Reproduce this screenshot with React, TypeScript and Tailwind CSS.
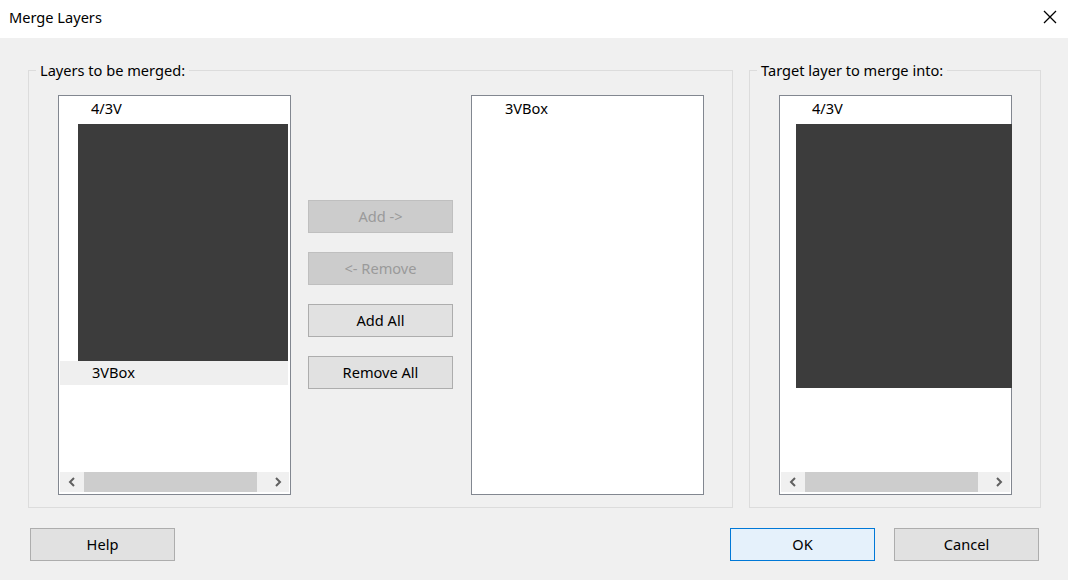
import React from 'react';

const FONT = { fontFamily: '"Noto Sans", "Open Sans", sans-serif' };

function ChevronLeft() {
  return (
    <svg width="8" height="10" viewBox="0 0 8 10">
      <path d="M6 1 L2 5 L6 9" fill="none" stroke="#606060" strokeWidth="2" />
    </svg>
  );
}

function ChevronRight() {
  return (
    <svg width="8" height="10" viewBox="0 0 8 10">
      <path d="M2 1 L6 5 L2 9" fill="none" stroke="#606060" strokeWidth="2" />
    </svg>
  );
}

function HScroll({ thumbLeft, thumbWidth }: { thumbLeft: number; thumbWidth: number }) {
  return (
    <div className="h-[20px] mx-[1px] mb-[2px] bg-[#f0f0f0] flex items-center relative">
      <div className="w-[23px] flex justify-center"><ChevronLeft /></div>
      <div className="flex-1 h-full relative">
        <div className="absolute top-0 h-full bg-[#cdcdcd]" style={{ left: thumbLeft, width: thumbWidth }} />
      </div>
      <div className="w-[23px] flex justify-center"><ChevronRight /></div>
    </div>
  );
}

function WinButton({ label, disabled, primary, className = '' }: { label: string; disabled?: boolean; primary?: boolean; className?: string }) {
  const tone = disabled
    ? 'bg-[#cccccc] border-[#bfbfbf] text-[#9a9a9a]'
    : primary
      ? 'bg-[#e5f1fb] border-[#0078d7] text-black'
      : 'bg-[#e1e1e1] border-[#adadad] text-black';
  return (
    <div className={`w-[145px] h-[33px] border flex items-center justify-center text-[14.6px] ${tone} ${className}`}>
      {label}
    </div>
  );
}

function GroupBox({ label, className, children }: { label: string; className: string; children: React.ReactNode }) {
  return (
    <div className={`relative border border-[#dcdcdc] h-[438px] ${className}`}>
      <span className="absolute -top-[11px] left-[7px] px-[4px] bg-[#f0f0f0] text-[14.6px] leading-[20px] text-black">{label}</span>
      {children}
    </div>
  );
}

export default function App() {
  return (
    <div className="w-[1068px] h-[580px] bg-[#f0f0f0] flex flex-col text-black" style={FONT}>
      {/* title bar */}
      <div className="h-[38px] bg-white flex items-center justify-between pl-[9px] pr-[11px] shrink-0">
        <span className="text-[14.6px] -mt-[3px]">Merge Layers</span>
        <svg width="14" height="14" viewBox="0 0 14 14" className="-mt-[4px]">
          <path d="M1 1 L13 13 M13 1 L1 13" stroke="#000" strokeWidth="1.3" />
        </svg>
      </div>

      <div className="pl-[28px] pt-[32px] flex flex-col">
        <div className="flex gap-[16px]">
          {/* Layers to be merged */}
          <GroupBox label="Layers to be merged:" className="w-[705px]">
            <div className="flex pl-[29px] pt-[24px]">
              {/* source list */}
              <div className="w-[233px] h-[400px] bg-white border border-[#828790] flex flex-col">
                <div className="h-[24px] pl-[32px] flex items-center text-[14.6px] mt-[1px]">4/3V</div>
                <div className="ml-[19px] mr-[2px] mt-[3px] h-[237px] bg-[#3c3c3c]" />
                <div className="ml-[1px] mr-[2px] h-[24px] bg-[#efefef] pl-[32px] flex items-center text-[14.6px]">3VBox</div>
                <div className="flex-1" />
                <HScroll thumbLeft={1} thumbWidth={173} />
              </div>

              {/* action buttons */}
              <div className="flex flex-col gap-[19px] ml-[17px] mt-[105px]">
                <WinButton label="Add ->" disabled />
                <WinButton label="<- Remove" disabled />
                <WinButton label="Add All" />
                <WinButton label="Remove All" />
              </div>

              {/* merged list */}
              <div className="ml-[18px] w-[233px] h-[400px] bg-white border border-[#828790]">
                <div className="h-[24px] pl-[33px] flex items-center text-[14.6px] mt-[1px]">3VBox</div>
              </div>
            </div>
          </GroupBox>

          {/* Target layer */}
          <GroupBox label="Target layer to merge into:" className="w-[292px]">
            <div className="pl-[29px] pt-[24px]">
              <div className="w-[233px] h-[400px] bg-white border border-[#828790] flex flex-col">
                <div className="h-[24px] pl-[32px] flex items-center text-[14.6px] mt-[1px]">4/3V</div>
                <div className="ml-[16px] -mr-[1px] mt-[3px] h-[264px] bg-[#3c3c3c]" />
                <div className="flex-1" />
                <HScroll thumbLeft={1} thumbWidth={173} />
              </div>
            </div>
          </GroupBox>
        </div>

        {/* footer buttons */}
        <div className="flex mt-[20px]">
          <WinButton label="Help" className="ml-[2px]" />
          <div className="flex-1" />
          <WinButton label="OK" primary />
          <WinButton label="Cancel" className="ml-[19px] mr-[29px]" />
        </div>
      </div>
    </div>
  );
}
